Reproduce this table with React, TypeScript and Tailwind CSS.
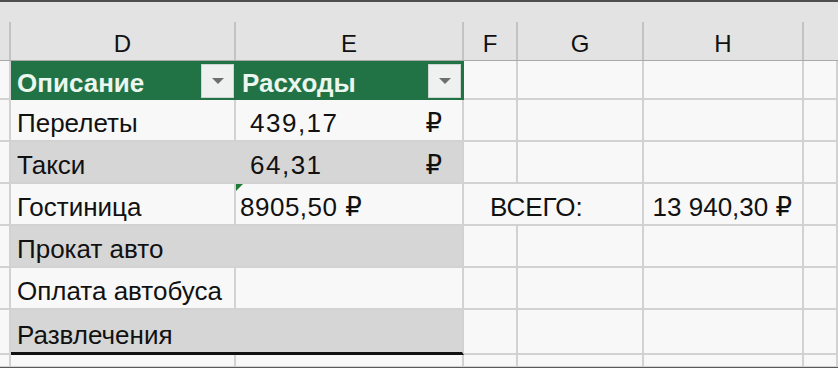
import React from 'react';

const font = { fontFamily: '"Liberation Sans", "DejaVu Sans", Arial, sans-serif' };

const grid = 'grid grid-cols-[11px_225px_228px_54px_126px_160px_34px]';
const text = 'flex items-end pb-[4px] leading-[26px] text-[26px] text-[#111]';
const cell = `${text} border-r-2 border-b-2 border-[#d2d2d2] bg-[#f8f8f8]`;
const bandCell = `${text} border-r-2 border-b-2 border-[#d2d2d2] bg-[#d6d6d6]`;

function FilterButton() {
  return (
    <div className="self-center w-[33px] h-[34px] bg-[#eef1ef] border border-[#cdd6d0] flex items-center justify-center">
      <svg width="12" height="6" viewBox="0 0 12 6">
        <path d="M0 0 L12 0 L6 6 Z" fill="#6e6e6e" />
      </svg>
    </div>
  );
}

type Row = { label: string; banded: boolean };

const rows: Row[] = [
  { label: 'Перелеты', banded: false },
  { label: 'Такси', banded: true },
  { label: 'Гостиница', banded: false },
  { label: 'Прокат авто', banded: true },
  { label: 'Оплата автобуса', banded: false },
  { label: 'Развлечения', banded: true },
];

export default function App() {
  return (
    <div className="w-[838px] h-[368px] overflow-hidden bg-[#f8f8f8]" style={font}>
      {/* Column letters */}
      <div className={`${grid} h-[61px] bg-[#e3e3e3] border-t-2 border-[#4f4f4f] border-b border-b-[#a9a9a9]`}>
        {['', 'D', 'E', 'F', 'G', 'H', ''].map((l, i) => (
          <div key={i} className="pt-[20px] h-full">
            <div className={`h-full flex items-end justify-center pb-[4px] text-[24px] leading-[24px] text-[#111] ${i < 6 ? 'border-r-2 border-[#c3c3c3]' : ''}`}>
              {l}
            </div>
          </div>
        ))}
      </div>

      {/* Table header */}
      <div className={`${grid} h-[39px]`}>
        <div className="border-r-2 border-b-2 border-[#d2d2d2] bg-[#f8f8f8]" />
        <div className="bg-[#217346] flex justify-between pl-[6px] pr-[2px]">
          <span className="self-end pb-[4px] text-[26px] leading-[26px] font-bold text-[#eaf6ee]">Описание</span>
          <FilterButton />
        </div>
        <div className="bg-[#217346] flex justify-between pl-[6px] pr-[1px] border-r-2 border-[#217346]">
          <span className="self-end pb-[4px] text-[26px] leading-[26px] font-bold text-[#eaf6ee]">Расходы</span>
          <FilterButton />
        </div>
        <div className={cell} />
        <div className={cell} />
        <div className={cell} />
        <div className={cell} />
      </div>

      {/* Data rows */}
      {rows.map((r, i) => {
        const last = i === rows.length - 1;
        const h = last ? 'h-[45px]' : 'h-[42px]';
        const edge = last ? 'border-b-[3px] border-b-[#111]' : '';
        const t = r.banded ? bandCell : cell;
        const first = r.banded
          ? `${text} bg-[#d6d6d6] ${last ? 'border-b-[3px] border-[#111]' : 'border-b-2 border-[#d2d2d2]'}`
          : cell;
        return (
          <div key={r.label} className={`${grid} ${h}`}>
            <div className="border-r-2 border-b-2 border-[#d2d2d2] bg-[#f8f8f8]" />
            <div className={`${first} pl-[6px]`}>{r.label}</div>
            {i === 0 || i === 1 ? (
              <div className={`${t} pl-[14px] pr-[20px] justify-between`}>
                <span className="tracking-[1.5px]">{i === 0 ? '439,17' : '64,31'}</span>
                <span>₽</span>
              </div>
            ) : i === 2 ? (
              <div className={`${t} relative pl-[4px]`}>
                <svg className="absolute left-0 top-0" width="7" height="7" viewBox="0 0 7 7">
                  <path d="M0 0 L7 0 L0 7 Z" fill="#1f7a35" />
                </svg>
                <span className="tracking-[0.5px]">8905,50 ₽</span>
              </div>
            ) : (
              <div className={`${t} ${edge}`} />
            )}
            {i === 2 ? (
              <>
                <div className={`${cell} col-span-2 pl-[26px]`}>ВСЕГО:</div>
                <div className={`${cell} justify-end pr-[10px]`}>13 940,30 ₽</div>
              </>
            ) : (
              <>
                <div className={cell} />
                <div className={cell} />
                <div className={cell} />
              </>
            )}
            <div className={cell} />
          </div>
        );
      })}

      {/* Partial next row */}
      <div className={`${grid} h-[12px]`}>
        {Array.from({ length: 7 }).map((_, i) => (
          <div key={i} className="border-r-2 border-b border-[#d2d2d2] bg-[#f8f8f8]" />
        ))}
      </div>
      <div className="h-[1px] bg-[#5a5a5a]" />
    </div>
  );
}
